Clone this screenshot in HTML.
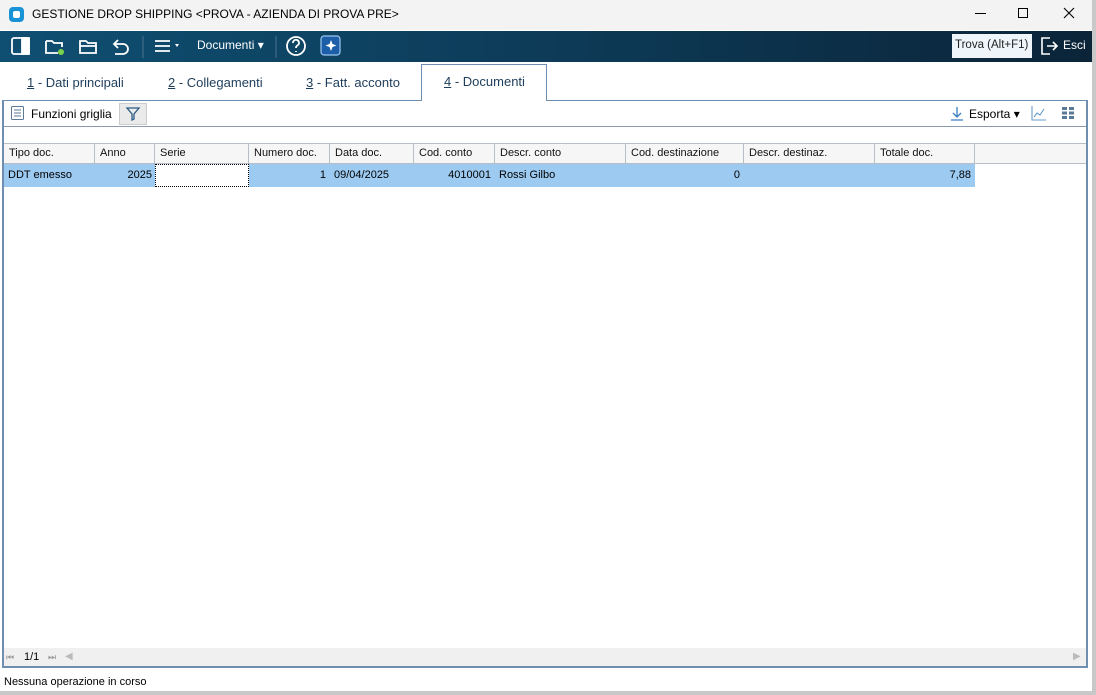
<!DOCTYPE html>
<html><head><meta charset="utf-8"><style>
*{box-sizing:border-box;margin:0;padding:0}
body{width:1096px;height:695px;overflow:hidden;background:#fff;font-family:"Liberation Sans",sans-serif;font-size:12px;color:#000;position:relative}
.abs{position:absolute}
#title{left:0;top:0;width:1096px;height:30px;background:#f3f3f3}
#tb{left:0;top:31px;width:1096px;height:31px;background:linear-gradient(90deg,#0f4f72,#0d3b58 50%,#0b2438)}
.ti{color:#fff;font-size:12px}
.tab{top:75px;font-size:13px;color:#1e3d5a}
#panel{left:2px;top:100px;width:1086px;height:568px;border:2px solid #6f8fb0;border-top:1px solid #6f8fb0}
.hd{position:absolute;top:144px;height:20px;border-right:1px solid #b8bec6;border-bottom:1px solid #b8bec6;background:#f6f6f6;padding:3px 5px;font-size:11px;color:#111}
.cell{position:absolute;top:164px;height:23px;background:#9dcaf1;padding:5px 4px;font-size:11px}
</style></head><body>
<div id="title" class="abs"></div>
<div class="abs" style="left:9px;top:7px;width:15px;height:15px;background:#1a93d6;border-radius:4px"><div style="margin:4px;width:7px;height:7px;background:#fff;border-radius:2px"></div></div>
<div class="abs" style="left:32px;top:7px;font-size:12px">GESTIONE DROP SHIPPING &lt;PROVA - AZIENDA DI PROVA PRE&gt;</div>
<div class="abs" style="left:975px;top:13px;width:11px;height:1px;background:#000"></div>
<div class="abs" style="left:1018px;top:8px;width:10px;height:10px;border:1px solid #000"></div>
<svg class="abs" style="left:1063px;top:7px" width="12" height="12" stroke="#000" stroke-width="1.1"><path d="M1 1l10 10M11 1L1 11"/></svg>
<div id="tb" class="abs"></div>
<svg class="abs" style="left:0;top:31px" width="350" height="31" fill="none" stroke="#fff" stroke-width="1.8">
<rect x="12" y="7" width="17" height="16" rx="2"/><rect x="22" y="7" width="7" height="16" fill="#fff"/>
<path d="M46 10h6l2 2h8v4M46 10v12h12"/><circle cx="61" cy="21" r="3" fill="#7ad24a" stroke="none"/>
<path d="M80 10h6l2 2h8v10H80z M80 15h16"/>
<path d="M118 9l-4 4 4 4M114 13h9a5 5 0 010 10h-8"/>
<path d="M143 5v22" stroke="#4a7290" stroke-width="1"/>
<path d="M155 10h15M155 15h15M155 20h15"/><path d="M175 13l2 3 2-3z" fill="#fff" stroke="none"/>
<path d="M276 5v22" stroke="#4a7290" stroke-width="1"/>
<circle cx="296" cy="15" r="9"/><path d="M293 12a3 3 0 115 2c-2 1-2 2-2 3M296 20v1"/>
<rect x="321" y="5" width="19" height="19" rx="3" fill="#1c5fa8" stroke="#9cc8f0" stroke-width="1.2"/>
<path d="M331 9l1.5 4 4 1.5-4 1.5-1.5 4-1.5-4-4-1.5 4-1.5z" fill="#fff" stroke="none"/>
</svg>
<div class="abs ti" style="left:197px;top:38px">Documenti ▾</div>
<div class="abs" style="left:952px;top:34px;width:80px;height:24px;background:#eef5fb;padding:5px 3px;font-size:11.5px;color:#222">Trova (Alt+F1)</div>
<svg class="abs" style="left:1040px;top:35px" width="20" height="22" fill="none" stroke="#fff" stroke-width="1.6"><path d="M10 3H2v16h8M7 11h10M13 7l4 4-4 4"/></svg>
<div class="abs ti" style="left:1063px;top:38px">Esci</div>
<div class="abs" style="left:421px;top:64px;width:126px;height:37px;background:#fff;border:1px solid #6f8fb0;border-bottom:none;z-index:2"></div>
<div class="abs tab" style="left:27px"><u>1</u> - Dati principali</div>
<div class="abs tab" style="left:168px"><u>2</u> - Collegamenti</div>
<div class="abs tab" style="left:306px"><u>3</u> - Fatt. acconto</div>
<div class="abs tab" style="left:444px;top:74px;z-index:3"><u>4</u> - Documenti</div>
<div id="panel" class="abs"></div>
<div class="abs" style="left:4px;top:126px;width:1082px;height:1px;background:#8a9aac"></div>
<svg class="abs" style="left:10px;top:105px" width="16" height="16" fill="none" stroke="#5a7a98"><rect x="1.5" y="1.5" width="12" height="13" rx="1"/><path d="M4 5h7M4 8h7M4 11h7"/></svg>
<div class="abs" style="left:31px;top:107px">Funzioni griglia</div>
<div class="abs" style="left:119px;top:103px;width:28px;height:22px;background:#eaeaea;border:1px solid #ccc"></div>
<svg class="abs" style="left:125px;top:106px" width="16" height="16" fill="none" stroke="#2a5a86" stroke-width="1.3"><path d="M2 2h12l-5 6v5l-2 1V8z"/></svg>
<svg class="abs" style="left:949px;top:106px" width="16" height="16" fill="none" stroke="#3a7ec0" stroke-width="1.3"><path d="M8 1v10M4 7l4 4 4-4M2 14h12"/></svg>
<div class="abs" style="left:969px;top:107px">Esporta ▾</div>
<svg class="abs" style="left:1031px;top:105px" width="16" height="16" fill="none" stroke="#6a9ccc" stroke-width="1.1"><path d="M1 1v14h14M3 12l3-4 3 2 4-6"/></svg>
<svg class="abs" style="left:1062px;top:106px" width="14" height="14" fill="#5a7a98"><rect x="0" y="1" width="5" height="3"/><rect x="7" y="1" width="5" height="3"/><rect x="0" y="5.5" width="5" height="3"/><rect x="7" y="5.5" width="5" height="3"/><rect x="0" y="10" width="5" height="3"/><rect x="7" y="10" width="5" height="3"/></svg>
<div class="abs" style="left:4px;top:143px;width:1082px;height:1px;background:#b8bec6"></div>
<div class="hd" style="left:4px;width:91px">Tipo doc.</div>
<div class="hd" style="left:95px;width:60px">Anno</div>
<div class="hd" style="left:155px;width:94px">Serie</div>
<div class="hd" style="left:249px;width:81px">Numero doc.</div>
<div class="hd" style="left:330px;width:84px">Data doc.</div>
<div class="hd" style="left:414px;width:81px">Cod. conto</div>
<div class="hd" style="left:495px;width:131px">Descr. conto</div>
<div class="hd" style="left:626px;width:118px">Cod. destinazione</div>
<div class="hd" style="left:744px;width:131px">Descr. destinaz.</div>
<div class="hd" style="left:875px;width:100px">Totale doc.</div>
<div class="hd" style="left:975px;width:111px;border-right:none"></div>
<div class="cell" style="left:4px;width:151px">DDT emesso<span style="position:absolute;right:3px">2025</span></div>
<div class="cell" style="left:155px;width:94px;background:#fff;border:1px dotted #000"></div>
<div class="cell" style="left:249px;width:81px;text-align:right">1</div>
<div class="cell" style="left:330px;width:84px">09/04/2025</div>
<div class="cell" style="left:414px;width:81px;text-align:right">4010001</div>
<div class="cell" style="left:495px;width:131px">Rossi Gilbo</div>
<div class="cell" style="left:626px;width:118px;text-align:right">0</div>
<div class="cell" style="left:744px;width:231px;text-align:right">7,88</div>
<div class="abs" style="left:4px;top:648px;width:1082px;height:18px;background:#f0f0f0"></div>
<div class="abs" style="left:6px;top:652px;font-size:9px;color:#999">⏮</div>
<div class="abs" style="left:24px;top:651px;font-size:11px">1/1</div>
<div class="abs" style="left:48px;top:652px;font-size:9px;color:#999">⏭</div>
<div class="abs" style="left:65px;top:651px;font-size:10px;color:#bbb">◀</div>
<div class="abs" style="left:1073px;top:651px;font-size:10px;color:#bbb">▶</div>
<div class="abs" style="left:4px;top:676px;font-size:11px">Nessuna operazione in corso</div>
<div class="abs" style="left:1092px;top:0;width:4px;height:695px;background:#c8c8c8"></div>
<div class="abs" style="left:0;top:691px;width:1096px;height:4px;background:#c8c8c8"></div>
</body></html>
